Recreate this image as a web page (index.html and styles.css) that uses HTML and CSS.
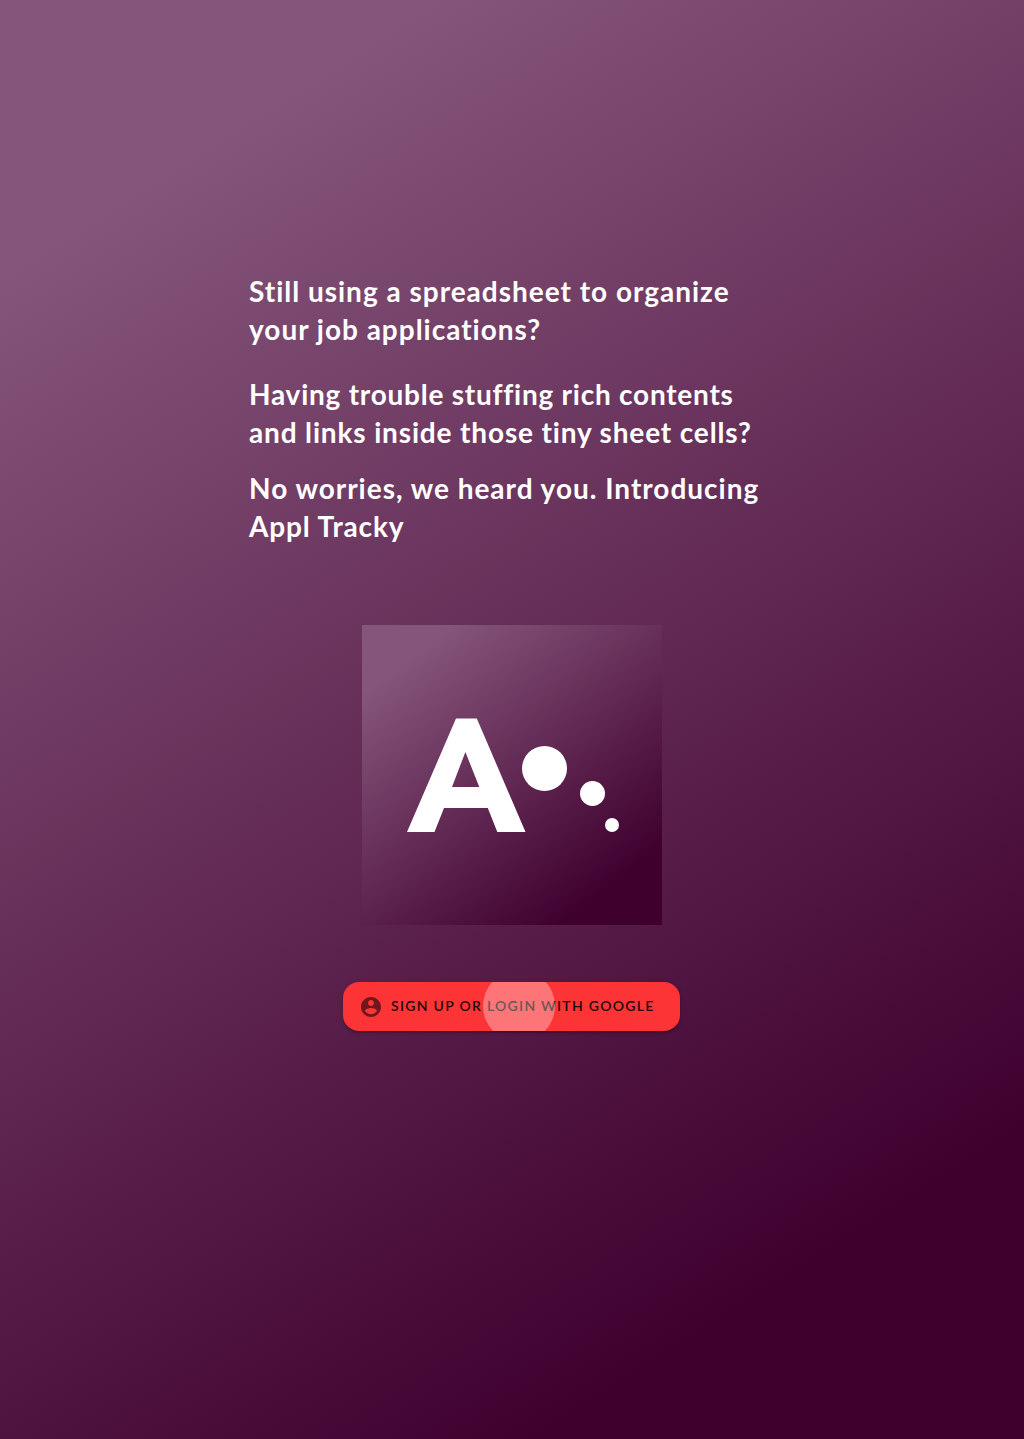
FILE: index.html
```
<!DOCTYPE html>
<html lang="en">
<head>
<meta charset="utf-8">
<title>Appl Tracky</title>
<link rel="stylesheet" href="styles.css">
</head>
<body>
<main class="landing">
  <section class="intro">
    <p class="intro-text"><span class="line-organize">Still using a spreadsheet to organize</span><br><span class="line-job">your job applications?</span></p>
    <p class="intro-text"><span class="line-rich">Having trouble stuffing rich contents</span><br><span class="line-cells">and links inside those tiny sheet cells?</span></p>
    <p class="intro-text"><span class="line-worries">No worries, we heard you. Introducing</span><br><span class="line-name">Appl Tracky</span></p>
  </section>
  <svg class="logo" viewBox="0 0 300 300" role="img" aria-label="Appl Tracky logo">
    <path fill="#fff" fill-rule="evenodd" d="M94 93.5h20.8L163.500 207h-28.200l-9.500-24H82l-9.500 24H45zM103.400 127 90 162h27.300z"/>
    <circle cx="182.500" cy="143.500" r="22.500" fill="#fff"/>
    <circle cx="230.500" cy="168.500" r="12.500" fill="#fff"/>
    <circle cx="250" cy="200" r="7" fill="#fff"/>
  </svg>
  <button class="login" type="button">
    <svg class="login-icon" viewBox="0 0 24 24" aria-hidden="true"><path d="M12 2C6.480 2 2 6.480 2 12s4.480 10 10 10 10-4.480 10-10S17.520 2 12 2zm0 3c1.660 0 3 1.340 3 3s-1.340 3-3 3-3-1.340-3-3 1.340-3 3-3zm0 14.200c-2.500 0-4.710-1.280-6-3.220.03-1.990 4-3.080 6-3.080 1.990 0 5.970 1.090 6 3.080-1.290 1.940-3.500 3.220-6 3.220z"/></svg>
    <span class="login-label">Sign up or login with Google</span>
    <span class="ripple"></span>
  </button>
</main>
</body>
</html>
```
FILE: styles.css
```
body {
  margin: 0;
}

.landing {
  box-sizing: border-box;
  display: flex;
  flex-direction: column;
  align-items: center;
  min-height: 1439px;
  padding-top: 272px;
  background: linear-gradient(147.5deg, #85557b 13%, #3f002e 85%);
}

.intro {
  width: 526px;
  color: #fff;
}

.intro-text {
  margin: 0 0 27px;
  font: 700 28px/38px Lato, "Open Sans", sans-serif;
  white-space: nowrap;
}

.intro-text + .intro-text {
  margin-bottom: 18px;
}

.intro-text:last-child {
  margin-bottom: 0;
}

.line-organize,
.line-job,
.line-worries {
  letter-spacing: 0.99px;
}

.line-rich {
  letter-spacing: 0.76px;
}

.line-cells {
  letter-spacing: 0.85px;
}

.line-name {
  letter-spacing: 0.88px;
}

.logo {
  display: block;
  width: 300px;
  height: 300px;
  margin-top: 80px;
  background: linear-gradient(142deg, #85557b 13%, #3f002e 85%);
}

.login {
  position: relative;
  box-sizing: border-box;
  display: flex;
  align-items: center;
  width: 337px;
  height: 49px;
  margin: 57px 1px 0 0;
  padding: 0 0 0 16px;
  border: 0;
  border-radius: 16px;
  overflow: hidden;
  background: #fc3436;
  box-shadow: 0 3px 1px -2px rgba(0, 0, 0, 0.2), 0 2px 2px rgba(0, 0, 0, 0.14), 0 1px 5px rgba(0, 0, 0, 0.12);
  color: #250608;
}

.login-icon {
  width: 24px;
  height: 24px;
  margin-right: 8px;
  fill: #6f171c;
}

.login-label {
  padding-bottom: 1px;
  font: 600 14px/20px Lato, "Open Sans", sans-serif;
  letter-spacing: 1.29px;
  text-transform: uppercase;
  white-space: nowrap;
}

.ripple {
  position: absolute;
  top: -12px;
  left: 140px;
  width: 72px;
  height: 72px;
  border-radius: 50%;
  background: rgba(255, 255, 255, 0.32);
}
```
